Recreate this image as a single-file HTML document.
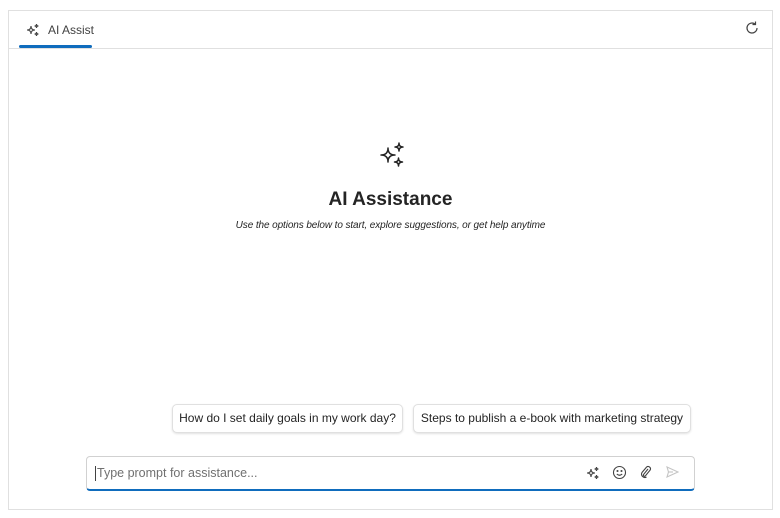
<!DOCTYPE html>
<html><head><meta charset="utf-8"><style>
*{box-sizing:border-box;margin:0;padding:0}
body{width:780px;height:518px;background:#fff;font-family:"Segoe UI","Liberation Sans",sans-serif;position:relative;overflow:hidden;color:#242424}
.frame{position:absolute;left:8px;top:10px;width:765px;height:500px;border:1px solid #e0e0e0}
.hdr{position:absolute;left:0;top:0;right:0;height:38px;border-bottom:1px solid #e0e0e0}
.tab{position:absolute;left:17px;top:12px;font-size:12px;color:#424242;display:flex;align-items:center}
.ul{position:absolute;left:10px;top:34px;width:73px;height:3px;background:#0f6cbd;border-radius:2px}
.ref{position:absolute;right:12px;top:9px}
.title{position:absolute;left:0;width:100%;top:178px;text-align:center;font-size:19px;font-weight:600;color:#242424}
.sub{position:absolute;left:0;width:100%;top:209px;text-align:center;font-size:10px;font-style:italic;color:#242424;letter-spacing:-0.1px}
.chip{position:absolute;top:393px;height:29px;border:1px solid #e0e0e0;border-radius:5px;box-shadow:0 1px 2px rgba(0,0,0,.12);font-size:12px;line-height:27px;text-align:center;color:#242424;background:#fff}
.inp{position:absolute;left:77px;top:445px;width:609px;height:35px;border:1px solid #d1d1d1;border-bottom:2px solid #0f6cbd;border-radius:4px;background:#fff}
.ph{position:absolute;left:8px;top:9px;font-size:12.5px;color:#707070;border-left:1px solid #424242;padding-left:1px;line-height:15px}
.ic{position:absolute;top:8px}
</style></head><body>
<div class="frame">
 <div class="hdr">
  <div class="tab"><svg width="14" height="14" viewBox="0 0 14 14" fill="none" stroke="#424242" stroke-width="1.1"><path d="M5 3Q5 7 9 7Q5 7 5 11Q5 7 1 7Q5 7 5 3Z"/><path d="M10.5 1Q10.5 3 12.5 3Q10.5 3 10.5 5Q10.5 3 8.5 3Q10.5 3 10.5 1Z"/><path d="M10.5 9Q10.5 11 12.5 11Q10.5 11 10.5 13Q10.5 11 8.5 11Q10.5 11 10.5 9Z"/></svg><span style="margin-left:8px">AI Assist</span></div>
  <div class="ul"></div>
  <svg class="ref" width="16" height="16" viewBox="0 0 16 16" fill="none" stroke="#424242" stroke-width="1.2"><path d="M13 8A5 5 0 1 1 11 4"/><path d="M11.5 1.5V4.5H8.5"/></svg>
 </div>
 <svg style="position:absolute;left:370px;top:131px" width="27" height="27" viewBox="0 0 27 27" fill="none" stroke="#242424" stroke-width="1.5" stroke-linejoin="round"><path d="M9 6Q9 13 16 13Q9 13 9 20Q9 13 2 13Q9 13 9 6Z"/><path d="M20 1Q20 5 24 5Q20 5 20 9Q20 5 16 5Q20 5 20 1Z"/><path d="M19.5 16Q19.5 20 23.5 20Q19.5 20 19.5 24Q19.5 20 15.5 20Q19.5 20 19.5 16Z"/></svg>
 <div class="title">AI Assistance</div>
 <div class="sub">Use the options below to start, explore suggestions, or get help anytime</div>
 <div class="chip" style="left:163px;width:231px">How do I set daily goals in my work day?</div>
 <div class="chip" style="left:404px;width:278px">Steps to publish a e-book with marketing strategy</div>
 <div class="inp">
  <div class="ph">Type prompt for assistance...</div>
  <svg class="ic" style="left:499px;top:9px" width="14" height="14" viewBox="0 0 14 14" fill="none" stroke="#424242" stroke-width="1.1"><path d="M5 3Q5 7 9 7Q5 7 5 11Q5 7 1 7Q5 7 5 3Z"/><path d="M10.5 1Q10.5 3 12.5 3Q10.5 3 10.5 5Q10.5 3 8.5 3Q10.5 3 10.5 1Z"/><path d="M10.5 9Q10.5 11 12.5 11Q10.5 11 10.5 13Q10.5 11 8.5 11Q10.5 11 10.5 9Z"/></svg>
  <svg class="ic" style="left:525px" width="15" height="15" viewBox="0 0 15 15" fill="none" stroke="#424242" stroke-width="1.1"><circle cx="7.5" cy="7.5" r="6"/><circle cx="5.5" cy="6" r=".5" fill="#424242"/><circle cx="9.5" cy="6" r=".5" fill="#424242"/><path d="M4.8 9Q7.5 11.5 10.2 9"/></svg>
  <svg class="ic" style="left:552px" width="14" height="14" viewBox="0 0 14 14" fill="none" stroke="#424242" stroke-width="1.1"><path d="M9 4L4.5 9.5A1.2 1.2 0 0 0 6.3 11L11.2 5A2.4 2.4 0 0 0 7.6 2L3 7.5A3.3 3.3 0 0 0 7.5 12"/></svg>
  <svg class="ic" style="left:578px" width="14" height="14" viewBox="0 0 14 14" fill="none" stroke="#c4c4c4" stroke-width="1.1"><path d="M2 2L13 7L2 12L3.5 7Z"/><path d="M3.5 7H8"/></svg>
 </div>
</div>
</body></html>
